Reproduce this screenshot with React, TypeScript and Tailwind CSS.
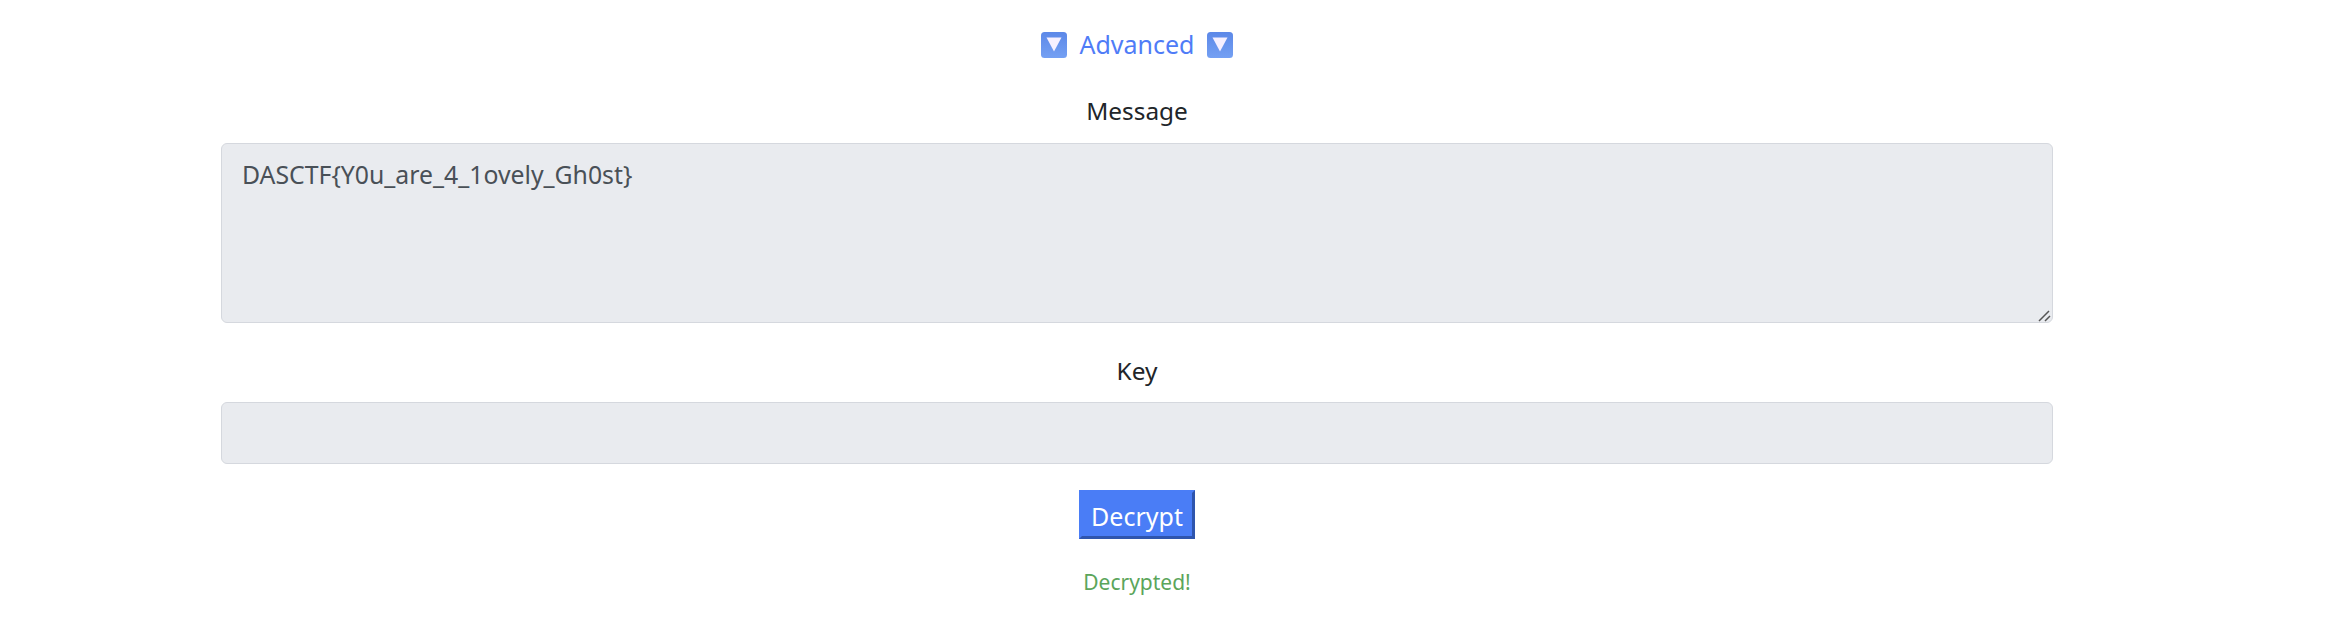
import React from 'react';

function ArrowBox({ id }: { id: string }) {
  return (
    <svg width="26" height="26" viewBox="0 0 26 26" className="block">
      <defs>
        <linearGradient id={id} x1="0" y1="0" x2="0" y2="1">
          <stop offset="0" stopColor="#5c88e8" />
          <stop offset="1" stopColor="#74a0f3" />
        </linearGradient>
      </defs>
      <rect x="0" y="0" width="26" height="26" rx="3.5" fill={`url(#${id})`} />
      <path d="M5.5 5.5H20.5L13 19.5Z" fill="#f6f0ff" />
    </svg>
  );
}

export default function App() {
  return (
    <div className="w-[2332px] h-[618px] overflow-hidden bg-white font-['Noto_Sans',sans-serif] pl-[221px] pr-[279px] pt-[32px] text-[24.4px]">
      <div className="flex items-center justify-center gap-3 h-[26px] text-[25px] text-[#4f7cf7]">
        <ArrowBox id="boxLeft" />
        <a>Advanced</a>
        <ArrowBox id="boxRight" />
      </div>

      <div className="mt-[37px] text-center text-[#212529] leading-[32px]">Message</div>
      <div className="relative mt-[16px]">
        <textarea
          readOnly
          value="DASCTF{Y0u_are_4_1ovely_Gh0st}"
          className="block w-full h-[180px] bg-[#e9ebef] border border-[#d5d8de] rounded-[6px] px-[20px] py-[13px] text-[#495057] text-[24.8px] leading-[34px] outline-none resize-none"
        />
        {/* resize grip */}
        <svg width="14" height="14" viewBox="0 0 14 14" className="absolute right-[2px] bottom-[1px] pointer-events-none">
          <path d="M2 13L12 3M8 13L13 8" stroke="#555" strokeWidth="1.5" fill="none" />
        </svg>
      </div>

      <div className="mt-[32px] text-center text-[#212529] leading-[32px]">Key</div>
      <input
        readOnly
        className="block mt-[15px] w-full h-[62px] bg-[#e9ebef] border border-[#d5d8de] rounded-[6px] px-[20px] outline-none"
      />

      <div className="mt-[26px] flex justify-center">
        <button className="w-[116px] h-[49px] bg-[#4a7df6] text-white text-[25px] leading-[30px] pt-[3px] border-[3px] border-t-[#4a7df6] border-l-[#4a7df6] border-r-[#2f55ad] border-b-[#2f55ad]">
          Decrypt
        </button>
      </div>

      <div className="mt-[29px] text-center text-[21px] leading-[28px] text-[#5ba55b]">Decrypted!</div>
    </div>
  );
}
